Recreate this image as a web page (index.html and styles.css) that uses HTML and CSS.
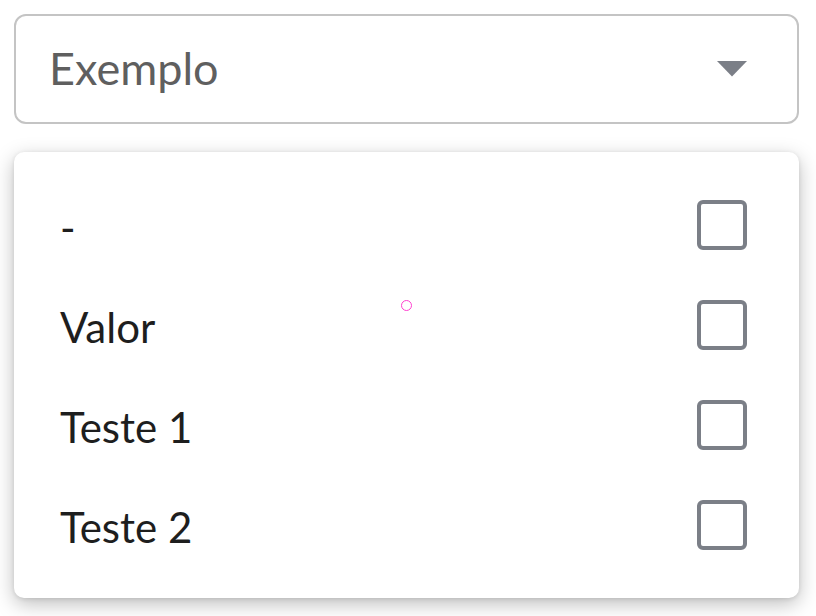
FILE: index.html
```html
<!DOCTYPE html>
<html lang="pt">
<head>
<meta charset="utf-8">
<title>Select</title>
<link rel="stylesheet" href="styles.css">
</head>
<body>
<div class="page">
  <div class="select">
    <span class="select-value">Exemplo</span>
    <svg class="caret" width="30" height="16" viewBox="0 0 30 16"><path d="M0 0 L30 0 L15 15.5 Z" fill="#7b7f87"/></svg>
  </div>
  <div class="menu">
    <div class="option"><span class="label">-</span><span class="checkbox"></span></div>
    <div class="option"><span class="label">Valor</span><span class="checkbox"></span></div>
    <div class="option"><span class="label">Teste 1</span><span class="checkbox"></span></div>
    <div class="option"><span class="label">Teste 2</span><span class="checkbox"></span></div>
  </div>
  <span class="touch"></span>
</div>
</body>
</html>
```
FILE: styles.css
```css
html, body {
  margin: 0;
  padding: 0;
  background: #ffffff;
}
body {
  font-family: "Lato", "Noto Sans", sans-serif;
}
.page {
  position: relative;
  width: 816px;
  height: 616px;
  padding: 14px 17px 0 14px;
  box-sizing: border-box;
  display: flex;
  flex-direction: column;
  gap: 28px;
}
.select {
  height: 110px;
  box-sizing: border-box;
  border: 2px solid #c4c4c4;
  border-radius: 12px;
  display: flex;
  align-items: center;
  justify-content: space-between;
  padding: 0 50px 0 33px;
}
.select-value {
  font-size: 45px;
  color: #5f5f5f;
  line-height: 1;
  margin-top: -2px;
}
.caret {
  display: block;
}
.menu {
  background: #fff;
  border-radius: 10px;
  box-shadow: 0 6px 20px rgba(0, 0, 0, 0.26), 0 1px 4px rgba(0, 0, 0, 0.1);
  padding: 23px 52px 23px 46px;
  display: flex;
  flex-direction: column;
}
.option {
  height: 100px;
  display: flex;
  align-items: center;
  justify-content: space-between;
}
.label {
  font-size: 42px;
  color: #1e1e1e;
  line-height: 1;
  margin-top: 4px;
}
.checkbox {
  width: 50px;
  height: 50px;
  box-sizing: border-box;
  border: 4.5px solid #7b7f87;
  border-radius: 6px;
}
.touch {
  position: absolute;
  left: 401px;
  top: 300px;
  width: 11px;
  height: 11px;
  box-sizing: border-box;
  border: 1.6px solid #ff3fcf;
  border-radius: 50%;
}
```
